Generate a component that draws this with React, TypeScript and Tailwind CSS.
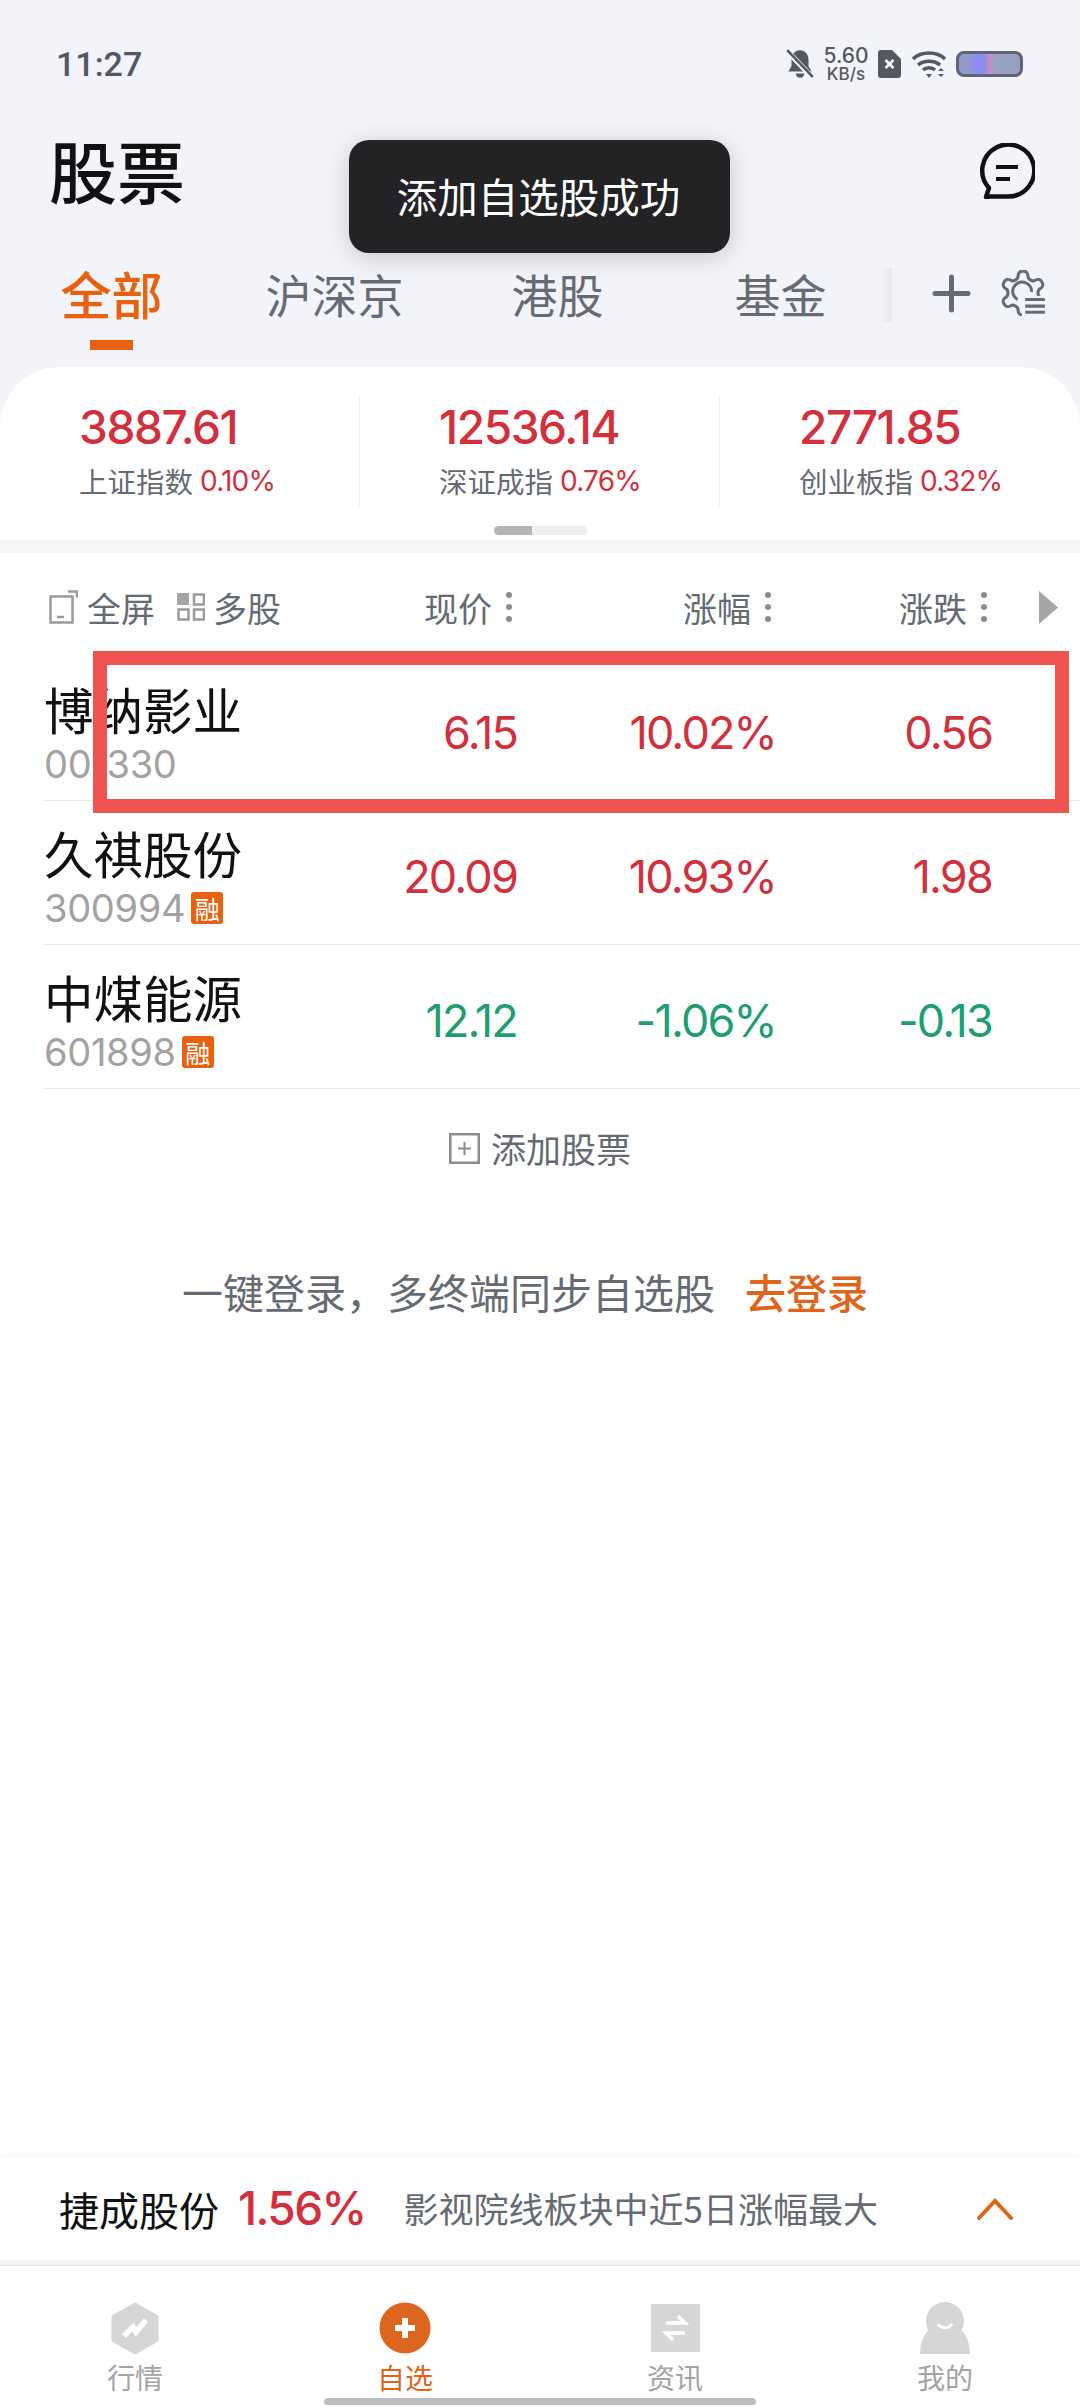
import React from 'react';

const RED = 'text-[#d2303c]';
const GREEN = 'text-[#1f9f70]';

interface Stock {
  name: string;
  code: string;
  price: string;
  pct: string;
  change: string;
  up: boolean;
  rong: boolean;
}

const stocks: Stock[] = [
  { name: '博纳影业', code: '001330', price: '6.15', pct: '10.02%', change: '0.56', up: true, rong: false },
  { name: '久祺股份', code: '300994', price: '20.09', pct: '10.93%', change: '1.98', up: true, rong: true },
  { name: '中煤能源', code: '601898', price: '12.12', pct: '-1.06%', change: '-0.13', up: false, rong: true },
];

const indices = [
  { value: '3887.61', name: '上证指数', pct: '0.10%' },
  { value: '12536.14', name: '深证成指', pct: '0.76%' },
  { value: '2771.85', name: '创业板指', pct: '0.32%' },
];

const Dots = () => (
  <span className="ml-[14px] flex flex-col gap-[6px]">
    <span className="h-[6px] w-[6px] rounded-full bg-[#8c8c8c]" />
    <span className="h-[6px] w-[6px] rounded-full bg-[#8c8c8c]" />
    <span className="h-[6px] w-[6px] rounded-full bg-[#8c8c8c]" />
  </span>
);

const StatusBar = () => (
  <div className="flex h-[126px] items-center pl-[56px] pt-[2px] text-[#55585f]">
    <span className="text-[34px] font-medium font-['Roboto',sans-serif]">11:27</span>
    <div className="ml-auto mr-[57px] flex items-center">
      <svg width="30" height="32" viewBox="0 0 28 30" fill="#55585f">
        <path d="M14 2c-5 0-8 4-8 9v6l-3 5h22l-3-5v-6c0-5-3-9-8-9z" />
        <path d="M10 24a4 4 0 0 0 8 0z" />
        <path d="M2 3l24 25" stroke="#f3f4f9" strokeWidth="5" />
        <path d="M2 2l24 25" stroke="#55585f" strokeWidth="2.500" />
      </svg>
      <div className="ml-[8px] flex w-[46px] flex-col items-center font-['Inter',sans-serif] font-medium">
        <span className="text-[21px] leading-[20px]">5.60</span>
        <span className="text-[17px] leading-[17px]">KB/s</span>
      </div>
      <svg className="ml-[9px]" width="23" height="28" viewBox="0 0 23 28">
        <path d="M3 0h11l9 9v16a3 3 0 0 1-3 3H3a3 3 0 0 1-3-3V3a3 3 0 0 1 3-3z" fill="#55585f" />
        <path d="M7.500 10l8 8M15.500 10l-8 8" stroke="#fff" strokeWidth="2.600" />
      </svg>
      <svg className="ml-[11px]" width="34" height="28" viewBox="0 0 34 28" fill="none" stroke="#55585f" strokeWidth="3.400">
        <path d="M1 9c8-8 24-8 32 0" />
        <path d="M6 15c6-5 16-5 22 0" />
        <path d="M11 20c3-3 9-3 12 0" />
        <path d="M14 24l3 4 3-4z" fill="#55585f" stroke="none" />
        <path d="M26 21l3-3 3 3zM26 24l3 3 3-3z" fill="#55585f" stroke="none" />
      </svg>
      <div className="ml-[10px] h-[26px] w-[67px] rounded-[8px] border-[3px] border-[#5e6478] bg-[linear-gradient(90deg,#8f9bc8_0%,#8f9bc8_15%,#8a8df0_30%,#8f90e8_42%,#c98bd0_50%,#9aa3c4_58%,#95a0bd_100%)]" />
    </div>
  </div>
);

const TitleRow = () => (
  <div className="flex h-[92px] items-center justify-between pb-[4px] pl-[49px] pr-[45px]">
    <span className="text-[68px] leading-none font-medium text-[#111]">股票</span>
    <svg className="mt-[2px]" width="56" height="56" viewBox="0 0 56 56" fill="none" stroke="#111" strokeWidth="4.500">
      <path d="M7 54l3-9A26 26 0 1 1 28 53.500H12z" strokeLinejoin="round" />
      <path d="M17 24h22M17 36h14" strokeWidth="4" />
    </svg>
  </div>
);

const TabRow = () => (
  <div className="flex h-[149px] items-start pt-[48px]">
    <div className="flex w-[223px] flex-col items-center">
      <span className="text-[51px] leading-[54px] font-medium text-[#e8610f]">全部</span>
      <span className="mt-[20px] h-[10px] w-[43px] bg-[#e8610f]" />
    </div>
    {['沪深京', '港股', '基金'].map((t) => (
      <div key={t} className="flex w-[223px] justify-center text-[46px] leading-[54px] text-[#666b73]">
        {t}
      </div>
    ))}
    <div className="flex h-[54px] items-center">
      <svg className="ml-[40px]" width="39" height="39" viewBox="0 0 39 39" stroke="#666b73" strokeWidth="5" strokeLinecap="round">
        <path d="M19.500 3v33M3 19.500h33" />
      </svg>
      <svg className="ml-[29px]" width="46" height="46" viewBox="1.500 1.500 21 21" fill="none" stroke="#666b73" strokeWidth="1.400">
        <path d="M12.220 2h-.44a2 2 0 0 0-2 2v.18a2 2 0 0 1-1 1.730l-.43.25a2 2 0 0 1-2 0l-.15-.08a2 2 0 0 0-2.730.73l-.22.38a2 2 0 0 0 .73 2.730l.15.1a2 2 0 0 1 1 1.720v.51a2 2 0 0 1-1 1.740l-.15.09a2 2 0 0 0-.73 2.730l.22.38a2 2 0 0 0 2.730.73l.15-.08a2 2 0 0 1 2 0l.43.25a2 2 0 0 1 1 1.730V20a2 2 0 0 0 2 2h.44a2 2 0 0 0 2-2v-.18a2 2 0 0 1 1-1.730l.43-.25a2 2 0 0 1 2 0l.15.08a2 2 0 0 0 2.730-.73l.22-.39a2 2 0 0 0-.73-2.730l-.15-.08a2 2 0 0 1-1-1.740v-.5a2 2 0 0 1 1-1.740l.15-.09a2 2 0 0 0 .73-2.730l-.22-.38a2 2 0 0 0-2.730-.73l-.15.08a2 2 0 0 1-2 0l-.43-.25a2 2 0 0 1-1-1.730V4a2 2 0 0 0-2-2z" />
        <path d="M9.500 15a4.300 4.300 0 1 1 6.400-3.500" />
        <rect x="11.500" y="13.300" width="12" height="10" fill="#f3f4f9" stroke="none" />
        <path d="M13 15h9M13 18h9M13 20.800h9" />
      </svg>
    </div>
  </div>
);

const IndexStrip = () => (
  <div className="pt-[29px]">
    <div className="grid grid-cols-3">
      {indices.map((item, i) => (
        <div
          key={item.name}
          className={`h-[110px] pl-[79px] ${i < 2 ? 'border-r border-[#eeeeee]' : ''}`}
        >
          <div className={`pt-[4px] text-[46px] leading-[54px] font-medium tracking-[-1.400px] font-['Inter',sans-serif] ${RED}`}>
            {item.value}
          </div>
          <div className="mt-[7px] flex items-center text-[28.500px] leading-[40px] text-[#666b73]">
            <span>{item.name}</span>
            <span className={`ml-[7px] font-['Inter',sans-serif] text-[28px] tracking-[-0.800px] ${RED}`}>{item.pct}</span>
          </div>
        </div>
      ))}
    </div>
    <div className="mt-[20px] flex justify-center">
      <span className="h-[9px] w-[38px] rounded-l-full bg-[#b5b5b5]" />
      <span className="h-[9px] w-[55px] rounded-r-full bg-[#eeeeee]" />
    </div>
    <div className="mt-[5px] h-[13px] bg-[#f5f5f6]" />
  </div>
);

const ListHeader = () => (
  <div className="flex h-[104px] items-center whitespace-nowrap pt-[4px] text-[34px] text-[#666b73]">
    <svg className="ml-[49px]" width="29" height="34" viewBox="0 0 29 34" fill="none" stroke="#9a9a9a" strokeWidth="2.500">
      <rect x="1.500" y="6.500" width="22" height="26" />
      <path d="M8 27h7" />
      <path d="M19 1.500h9v6" />
    </svg>
    <span className="ml-[9px] w-[68px]">全屏</span>
    <svg className="ml-[22px]" width="28" height="28" viewBox="0 0 28 28" fill="none" stroke="#9a9a9a" strokeWidth="2.500">
      <rect x="0" y="0" width="12" height="12" fill="#a5a5a5" stroke="none" />
      <rect x="17" y="1.500" width="10" height="10" />
      <rect x="1.500" y="16.500" width="10" height="10" />
      <rect x="17" y="16.500" width="10" height="10" />
    </svg>
    <span className="ml-[8px] w-[68px]">多股</span>
    <div className="ml-[143px] flex w-[83px] items-center">现价<Dots /></div>
    <div className="ml-[176px] flex w-[83px] items-center">涨幅<Dots /></div>
    <div className="ml-[133px] flex w-[83px] items-center">涨跌<Dots /></div>
    <svg className="ml-[56px]" width="20" height="33" viewBox="0 0 20 33">
      <path d="M1 0l19 16.500L1 33z" fill="#a5a5a5" strokeLinejoin="round" />
    </svg>
  </div>
);

const StockRow = ({ stock }: { stock: Stock }) => {
  const color = stock.up ? RED : GREEN;
  return (
    <div className="ml-[44px] flex h-[144px] border-b border-[#e8e8e8]">
      <div className="w-[273px] pt-[22px]">
        <div className="text-[49.500px] leading-[60px] text-[#111]">{stock.name}</div>
        <div className="flex items-center leading-[50px]">
          <span className="text-[38px] tracking-[-0.300px] text-[#a2a2a2] font-['Inter',sans-serif]">{stock.code}</span>
          {stock.rong && (
            <span className="ml-[6px] flex h-[32px] w-[32px] items-center justify-center rounded-[3px] bg-[#e8610f] text-[25px] text-white">
              融
            </span>
          )}
        </div>
      </div>
      <div className={`flex flex-1 items-center pt-[8px] text-[45px] tracking-[-1.800px] font-['Inter',sans-serif] ${color}`}>
        <span className="w-[200px] text-right">{stock.price}</span>
        <span className="w-[259px] text-right">{stock.pct}</span>
        <span className="w-[216px] text-right">{stock.change}</span>
      </div>
    </div>
  );
};

const LoginPrompt = () => (
  <div className="mt-[52px] flex items-center justify-center pr-[30px] text-[41px] leading-[60px]">
    <span className="text-[#666b73]">一键登录，多终端同步自选股</span>
    <span className="ml-[30px] font-medium text-[#e0651a]">去登录</span>
  </div>
);

const Banner = () => (
  <div className="shadow-[0_-4px_6px_rgba(0,0,0,0.025)]">
    <div className="flex h-[103px] items-center bg-white pl-[59px] pr-[67px]">
      <span className="text-[40px] text-[#111]">捷成股份</span>
      <span className={`ml-[19px] text-[46px] font-medium tracking-[-1.600px] font-['Inter',sans-serif] ${RED}`}>1.56%</span>
      <span className="ml-[38px] text-[35px] text-[#666b73]">影视院线板块中近5日涨幅最大</span>
      <svg className="ml-auto" width="36" height="22" viewBox="0 0 36 22" fill="none" stroke="#e0651a" strokeWidth="4" strokeLinecap="round">
        <path d="M2 20L18 3l16 17" />
      </svg>
    </div>
    <div className="h-[6px] border-b border-[#e6e6e8] bg-[#f2f3f6]" />
  </div>
);

const tabItems = [
  {
    label: '行情',
    icon: (
      <svg width="48" height="53" viewBox="0 0 48 53">
        <path d="M24 2l22 12.500v24L24 51 2 38.500v-24z" fill="#d6d6d6" stroke="#d6d6d6" strokeWidth="3" strokeLinejoin="round" />
        <path d="M13 34l9-9 3 5 10-12" fill="none" stroke="#fff" strokeWidth="5.500" />
      </svg>
    ),
  },
  {
    label: '自选',
    active: true,
    icon: (
      <svg width="52" height="52" viewBox="0 0 52 52">
        <circle cx="26" cy="26" r="25.500" fill="#dd661f" />
        <path d="M26 16v20M16 26h20" stroke="#fff" strokeWidth="6" />
      </svg>
    ),
  },
  {
    label: '资讯',
    icon: (
      <svg width="49" height="48" viewBox="0 0 49 48">
        <rect width="49" height="48" fill="#d6d6d6" />
        <path d="M15 19h19l-7-7M34 29H15l7 7" fill="none" stroke="#fff" strokeWidth="3.500" />
      </svg>
    ),
  },
  {
    label: '我的',
    icon: (
      <svg width="50" height="52" viewBox="0 0 50 52">
        <circle cx="25" cy="19" r="19" fill="#d6d6d6" />
        <path d="M0 52c0-14 6-24 14-28h22c8 4 14 14 14 28z" fill="#d6d6d6" />
        <path d="M18 22c3 5 11 5 14 0" fill="none" stroke="#fff" strokeWidth="3" />
      </svg>
    ),
  },
];

const TabBar = () => (
  <div className="grid h-[142px] grid-cols-4 bg-white">
    {tabItems.map((t) => (
      <div key={t.label} className="flex flex-col items-center pt-[35px]">
        <div className="flex h-[54px] items-center">{t.icon}</div>
        <span className={`mt-[2px] text-[28px] leading-[40px] ${t.active ? 'text-[#e0651a]' : 'text-[#a3a3a3]'}`}>
          {t.label}
        </span>
      </div>
    ))}
  </div>
);

export default function App() {
  return (
    <div className="relative flex h-[2408px] w-[1080px] flex-col overflow-hidden bg-[#f3f4f9] font-['Noto_Sans_CJK_SC','Noto_Sans',sans-serif]">
      <StatusBar />
      <TitleRow />
      <TabRow />

      <div className="flex flex-1 flex-col rounded-t-[60px] bg-white">
        <IndexStrip />
        <ListHeader />
        {stocks.map((s) => (
          <StockRow key={s.code} stock={s} />
        ))}
        <div className="flex h-[120px] items-center justify-center pb-[2px] text-[35px] text-[#666b73]">
          <svg width="31" height="31" viewBox="0 0 31 31" fill="none" stroke="#8c8c8c" strokeWidth="2.500">
            <rect x="1.250" y="1.250" width="28.500" height="28.500" />
            <path d="M15.500 9v13M9 15.500h13" strokeWidth="2" />
          </svg>
          <span className="ml-[11px]">添加股票</span>
        </div>
        <LoginPrompt />
        <div className="flex-1" />
        <Banner />
        <TabBar />
      </div>

      {/* toast */}
      <div className="absolute left-[349px] top-[140px] flex h-[113px] w-[381px] items-center justify-center rounded-[20px] bg-[#232325] pr-[2px] text-[40.500px] text-white shadow-[0_4px_24px_rgba(0,0,0,0.18)]">
        添加自选股成功
      </div>

      {/* shadow edge of the scrolling tabs */}
      <div className="absolute left-[880px] top-[268px] h-[54px] w-[12px] bg-gradient-to-r from-transparent to-[#e6e7ec]" />

      {/* annotation box drawn over the first row */}
      <div className="absolute left-[93px] top-[651px] h-[162px] w-[976px] border-[14px] border-[#ef5350]" />

      {/* home indicator */}
      <div className="absolute bottom-[3px] left-[324px] h-[7px] w-[432px] rounded-full bg-[#bdbdbd]" />
    </div>
  );
}
